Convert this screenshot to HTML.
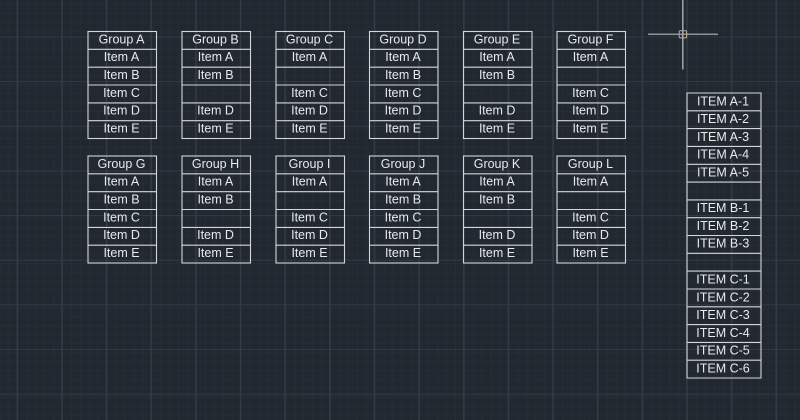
<!DOCTYPE html>
<html>
<head>
<meta charset="utf-8">
<style>
html,body{margin:0;padding:0;background:#212830;width:800px;height:420px;overflow:hidden}
svg{display:block}
text{font-family:"Liberation Sans",sans-serif;font-size:12.5px;fill:#e8eaeb;text-anchor:middle}
</style>
</head>
<body>
<svg width="800" height="420" viewBox="0 0 800 420" xmlns="http://www.w3.org/2000/svg">
<defs>
<pattern id="minor" x="8.5" y="3.8" width="8.93" height="8.93" patternUnits="userSpaceOnUse">
<path d="M0.5 0V8.93M0 0.5H8.93" stroke="#262d36" stroke-width="1" fill="none"/>
</pattern>
<pattern id="major" x="16.5" y="36.5" width="44.65" height="44.65" patternUnits="userSpaceOnUse">
<path d="M0.75 0V44.65" stroke="#333a45" stroke-width="1.5" fill="none"/>
<path d="M0 0.5H44.65" stroke="#333a45" stroke-width="1.1" fill="none"/>
</pattern>
<g id="t68" fill="none" stroke="#d4d7d9" stroke-width="1.1">
<rect x="0" y="0" width="68.5" height="107"/>
<path d="M0 17.8H68.5M0 35.7H68.5M0 53.5H68.5M0 71.4H68.5M0 89.2H68.5"/>
</g>
</defs>
<rect width="800" height="420" fill="#212830"/>
<rect width="800" height="420" fill="url(#minor)"/>
<rect width="800" height="420" fill="url(#major)"/>

<g transform="translate(88,31.5)"><use href="#t68"/><text x="33.5" y="11.8">Group A</text><text x="33.5" y="29.5">Item A</text><text x="33.5" y="47.5">Item B</text><text x="33.5" y="65.5">Item C</text><text x="33.5" y="83">Item D</text><text x="33.5" y="101">Item E</text></g>
<g transform="translate(182,31.5)"><use href="#t68"/><text x="33.5" y="11.8">Group B</text><text x="33.5" y="29.5">Item A</text><text x="33.5" y="47.5">Item B</text><text x="33.5" y="83">Item D</text><text x="33.5" y="101">Item E</text></g>
<g transform="translate(276,31.5)"><use href="#t68"/><text x="33.5" y="11.8">Group C</text><text x="33.5" y="29.5">Item A</text><text x="33.5" y="65.5">Item C</text><text x="33.5" y="83">Item D</text><text x="33.5" y="101">Item E</text></g>
<g transform="translate(369.5,31.5)"><use href="#t68"/><text x="33.5" y="11.8">Group D</text><text x="33.5" y="29.5">Item A</text><text x="33.5" y="47.5">Item B</text><text x="33.5" y="65.5">Item C</text><text x="33.5" y="83">Item D</text><text x="33.5" y="101">Item E</text></g>
<g transform="translate(463.5,31.5)"><use href="#t68"/><text x="33.5" y="11.8">Group E</text><text x="33.5" y="29.5">Item A</text><text x="33.5" y="47.5">Item B</text><text x="33.5" y="83">Item D</text><text x="33.5" y="101">Item E</text></g>
<g transform="translate(557,31.5)"><use href="#t68"/><text x="33.5" y="11.8">Group F</text><text x="33.5" y="29.5">Item A</text><text x="33.5" y="65.5">Item C</text><text x="33.5" y="83">Item D</text><text x="33.5" y="101">Item E</text></g>

<g transform="translate(88,156)"><use href="#t68"/><text x="33.5" y="11.8">Group G</text><text x="33.5" y="29.5">Item A</text><text x="33.5" y="47.5">Item B</text><text x="33.5" y="65.5">Item C</text><text x="33.5" y="83">Item D</text><text x="33.5" y="101">Item E</text></g>
<g transform="translate(182,156)"><use href="#t68"/><text x="33.5" y="11.8">Group H</text><text x="33.5" y="29.5">Item A</text><text x="33.5" y="47.5">Item B</text><text x="33.5" y="83">Item D</text><text x="33.5" y="101">Item E</text></g>
<g transform="translate(276,156)"><use href="#t68"/><text x="33.5" y="11.8">Group I</text><text x="33.5" y="29.5">Item A</text><text x="33.5" y="65.5">Item C</text><text x="33.5" y="83">Item D</text><text x="33.5" y="101">Item E</text></g>
<g transform="translate(369.5,156)"><use href="#t68"/><text x="33.5" y="11.8">Group J</text><text x="33.5" y="29.5">Item A</text><text x="33.5" y="47.5">Item B</text><text x="33.5" y="65.5">Item C</text><text x="33.5" y="83">Item D</text><text x="33.5" y="101">Item E</text></g>
<g transform="translate(463.5,156)"><use href="#t68"/><text x="33.5" y="11.8">Group K</text><text x="33.5" y="29.5">Item A</text><text x="33.5" y="47.5">Item B</text><text x="33.5" y="83">Item D</text><text x="33.5" y="101">Item E</text></g>
<g transform="translate(557,156)"><use href="#t68"/><text x="33.5" y="11.8">Group L</text><text x="33.5" y="29.5">Item A</text><text x="33.5" y="65.5">Item C</text><text x="33.5" y="83">Item D</text><text x="33.5" y="101">Item E</text></g>

<g transform="translate(687,93)">
<path fill="none" stroke="#d4d7d9" stroke-width="1.1" d="M0 0H74V285H0ZM0 17.8H74M0 35.6H74M0 53.4H74M0 71.3H74M0 89.1H74M0 106.9H74M0 124.7H74M0 142.5H74M0 160.3H74M0 178.1H74M0 196H74M0 213.8H74M0 231.6H74M0 249.4H74M0 267.2H74"/>
<text x="36" y="12.3">ITEM A-1</text>
<text x="36" y="30.1">ITEM A-2</text>
<text x="36" y="47.9">ITEM A-3</text>
<text x="36" y="65.7">ITEM A-4</text>
<text x="36" y="83.5">ITEM A-5</text>
<text x="36" y="119.1">ITEM B-1</text>
<text x="36" y="136.9">ITEM B-2</text>
<text x="36" y="154.7">ITEM B-3</text>
<text x="36" y="190.5">ITEM C-1</text>
<text x="36" y="208.3">ITEM C-2</text>
<text x="36" y="226.1">ITEM C-3</text>
<text x="36" y="243.9">ITEM C-4</text>
<text x="36" y="261.7">ITEM C-5</text>
<text x="36" y="279.5">ITEM C-6</text>
</g>

<path d="M648 34.2H718" stroke="#b4b8bc" stroke-width="1.1" fill="none"/>
<path d="M682.8 0V69.5" stroke="#a4a8ac" stroke-width="1.5" fill="none"/>
<rect x="679.2" y="30.7" width="7.4" height="7.2" rx="1" fill="none" stroke="#a9adb1" stroke-width="1"/>
<path d="M686.6 31V38" stroke="#b5a96a" stroke-width="0.9" fill="none"/>
</svg>
</body>
</html>
